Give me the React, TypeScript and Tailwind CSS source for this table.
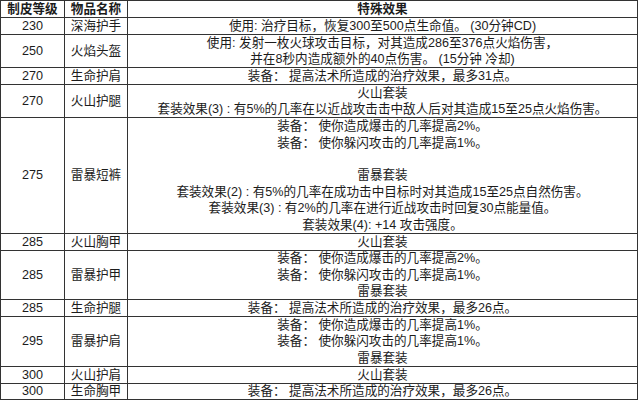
import React from "react";

type Row = { lv: string; name: string; lines: string[]; h: number };

const rows: Row[] = [
  { lv: "230", name: "深海护手", lines: ["使用: 治疗目标，恢复300至500点生命值。 (30分钟CD)"], h: 17 },
  {
    lv: "250",
    name: "火焰头盔",
    lines: ["使用: 发射一枚火球攻击目标，对其造成286至376点火焰伤害，", "并在8秒内造成额外的40点伤害。 (15分钟 冷却)"],
    h: 33,
  },
  { lv: "270", name: "生命护肩", lines: ["装备： 提高法术所造成的治疗效果，最多31点。"], h: 17 },
  {
    lv: "270",
    name: "火山护腿",
    lines: ["火山套装", "套装效果(3) : 有5%的几率在以近战攻击击中敌人后对其造成15至25点火焰伤害。"],
    h: 33,
  },
  {
    lv: "275",
    name: "雷暴短裤",
    lines: [
      "装备： 使你造成爆击的几率提高2%。",
      "装备： 使你躲闪攻击的几率提高1%。",
      "",
      "雷暴套装",
      "套装效果(2) : 有5%的几率在成功击中目标时对其造成15至25点自然伤害。",
      "套装效果(3) : 有2%的几率在进行近战攻击时回复30点能量值。",
      "套装效果(4): +14 攻击强度。",
    ],
    h: 116,
  },
  { lv: "285", name: "火山胸甲", lines: ["火山套装"], h: 17 },
  {
    lv: "285",
    name: "雷暴护甲",
    lines: ["装备： 使你造成爆击的几率提高2%。", "装备： 使你躲闪攻击的几率提高1%。", "雷暴套装"],
    h: 49,
  },
  { lv: "285", name: "生命护腿", lines: ["装备： 提高法术所造成的治疗效果，最多26点。"], h: 17 },
  {
    lv: "295",
    name: "雷暴护肩",
    lines: ["装备： 使你造成爆击的几率提高1%。", "装备： 使你躲闪攻击的几率提高1%。", "雷暴套装"],
    h: 50,
  },
  { lv: "300", name: "火山护肩", lines: ["火山套装"], h: 17 },
  { lv: "300", name: "生命胸甲", lines: ["装备： 提高法术所造成的治疗效果，最多26点。"], h: 16 },
];

const font = { fontFamily: '"Liberation Sans", "Noto Sans CJK SC", sans-serif' };

export default function App() {
  return (
    <div className="w-[640px] h-[400px] bg-white overflow-hidden" style={font}>
      <div className="w-[638px] border-t border-l border-r border-[#333] text-[12.6px] leading-[16.5px] text-[#1c1c1c]">
        <div className="flex h-[17px] border-b border-[#333] font-bold">
          <div className="w-[64px] shrink-0 border-r border-[#333] flex items-center justify-center">制皮等级</div>
          <div className="w-[63px] shrink-0 border-r border-[#333] flex items-center justify-center">物品名称</div>
          <div className="flex-1 flex items-center justify-center">特殊效果</div>
        </div>
        {rows.map((r, i) => (
          <div key={i} className="flex border-b border-[#333]" style={{ height: r.h }}>
            <div className="w-[64px] shrink-0 border-r border-[#333] flex items-center justify-center">{r.lv}</div>
            <div className="w-[63px] shrink-0 border-r border-[#333] flex items-center justify-center">{r.name}</div>
            <div className="flex-1 flex flex-col items-center justify-center">
              {r.lines.map((l, j) => (
                <div key={j} className="whitespace-pre h-[16.5px] leading-[16.5px]">
                  {l}
                </div>
              ))}
            </div>
          </div>
        ))}
      </div>
    </div>
  );
}
